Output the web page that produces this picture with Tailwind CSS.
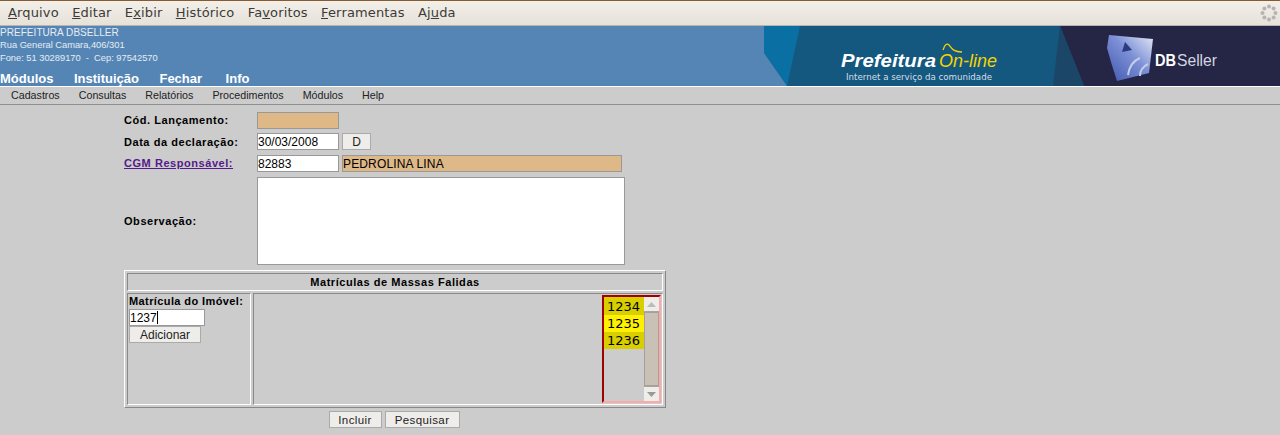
<!DOCTYPE html>
<html><head><meta charset="utf-8">
<script src="https://cdn.jsdelivr.net/npm/@tailwindcss/browser@4"></script>
<title>Prefeitura On-line</title></head>
<body class="m-0 h-[435px] w-[1280px] overflow-hidden bg-[#cccccc] font-['Liberation_Sans',sans-serif] text-black">
<div class="flex h-[26px] items-center justify-between border-t border-t-[#8a5a30] border-b border-b-[#b9b5ae] bg-gradient-to-b from-[#f2efe9] to-[#e6e2da] pl-2 pr-[2px] font-['DejaVu_Sans',sans-serif] text-[13px] text-[#3c3b37]">
  <div class="flex gap-[13.3px] tracking-[0.15px]">
    <span><u>A</u>rquivo</span><span><u>E</u>ditar</span><span>E<u>x</u>ibir</span><span><u>H</u>istórico</span><span>Fa<u>v</u>oritos</span><span><u>F</u>erramentas</span><span>Aj<u>u</u>da</span>
  </div>
  <svg width="18" height="18" viewBox="0 0 18 18" fill="#b4b4b4"><circle cx="9" cy="2.500" r="2"/><circle cx="13.600" cy="4.400" r="2"/><circle cx="15.500" cy="9" r="2"/><circle cx="13.600" cy="13.600" r="2"/><circle cx="9" cy="15.500" r="2"/><circle cx="4.400" cy="13.600" r="2"/><circle cx="2.500" cy="9" r="2"/><circle cx="4.400" cy="4.400" r="2"/></svg>
</div>
<header class="relative h-[60px] overflow-hidden bg-[#5585b5] text-white">
  <div class="flex h-full flex-col">
    <p class="h-[13px] text-[10px] leading-[13px] tracking-[0.05px] text-white/85">PREFEITURA DBSELLER</p>
    <p class="h-[13px] text-[9.300px] leading-[13px] text-white/85">Rua General Camara,406/301</p>
    <p class="h-[13px] text-[9.300px] leading-[13px] whitespace-pre text-white/85">Fone: 51 30289170  -  Cep: 97542570</p>
    <nav class="mt-[7px] flex gap-[20.500px] text-[13px] leading-[14px] font-bold"><span>Módulos</span><span>Instituição</span><span>Fechar</span><span class="ml-[3px]">Info</span></nav>
  </div>
  <svg class="absolute top-0 left-[764px]" width="516" height="60" viewBox="0 0 516 60">
    <defs><linearGradient id="dbg" x1="1" y1="0" x2="0" y2="1"><stop offset="0" stop-color="#e4e8f6"/><stop offset="0.45" stop-color="#7d90d6"/><stop offset="1" stop-color="#3f57ae"/></linearGradient></defs>
    <rect width="516" height="60" fill="#14577f"/>
    <polygon points="0,0 36,0 23,60 0,27" fill="#0a70a3"/>
    <polygon points="0,27 23,60 0,60" fill="#5585b5"/>
    <polygon points="296,0 516,0 516,60 320,60" fill="#252645"/>
    <polygon points="296,0 320,60 289,60" fill="#1b4667"/>
    <polygon points="345,9 389,13 385,47 353,55 347,36 343,22" fill="url(#dbg)"/>
    <polygon points="361,16 368,24 358,26" fill="#2c3a80"/>
    <path d="M364 49 Q366 36 376 32 M376 50 Q376 42 384 38" stroke="#c2cde9" stroke-width="2" fill="none"/>
    <path d="M179 24 C181 18 183 17 185 19 C188 23 190 26 198 26" stroke="#f4d400" stroke-width="1.300" fill="none"/>
    <text x="77" y="41" font-family="'Liberation Sans',sans-serif" font-size="18" font-weight="700" font-style="italic" fill="#fff" textLength="95" lengthAdjust="spacingAndGlyphs">Prefeitura</text>
    <text x="175" y="41" font-family="'Liberation Sans',sans-serif" font-size="18" font-style="italic" fill="#f4d400" textLength="58" lengthAdjust="spacingAndGlyphs">On-line</text>
    <text x="82" y="54" font-family="'DejaVu Sans',sans-serif" font-size="8.500" fill="#d5dfe6" textLength="146" lengthAdjust="spacingAndGlyphs">Internet a serviço da comunidade</text>
    <text x="391" y="40" font-family="'Liberation Sans',sans-serif" font-size="16" font-weight="700" fill="#fff" textLength="21" lengthAdjust="spacingAndGlyphs">DB</text>
    <text x="413" y="40" font-family="'Liberation Sans',sans-serif" font-size="16" fill="#d3d6e0" textLength="40" lengthAdjust="spacingAndGlyphs">Seller</text>
  </svg>
</header>
<nav class="flex h-[19px] items-center gap-[19px] border-t border-t-white border-b border-b-[#8f8f8f] pl-[11px] text-[10.700px] text-[#222]">
  <span>Cadastros</span><span>Consultas</span><span>Relatórios</span><span>Procedimentos</span><span>Módulos</span><span>Help</span>
</nav>
<main class="ml-[124px] w-[542px] pt-[7px] text-[11px] tracking-[0.55px]">
  <div class="grid grid-cols-[133px_1fr] grid-rows-[21px_22px_22px_88px] items-start">
    <label class="font-bold leading-[17px]">Cód. Lançamento:</label>
    <div class="h-[17px] w-[82px] border border-[#999] bg-[#deb887]"></div>
    <label class="font-bold leading-[18px]">Data da declaração:</label>
    <div class="flex items-start gap-[3px]">
      <div class="h-[17px] w-[82px] border border-[#999] bg-white text-[12px] leading-[16px] tracking-normal">30/03/2008</div>
      <button class="h-[17px] w-[29px] border border-[#aaa] bg-[#efedea] text-[12px] leading-[14px] tracking-normal text-[#222]">D</button>
    </div>
    <a class="font-bold leading-[17px] text-[#551a8b] underline">CGM Responsável:</a>
    <div class="flex items-start gap-[3px]">
      <div class="h-[17px] w-[82px] border border-[#999] bg-white text-[12px] leading-[16px] tracking-normal">82883</div>
      <div class="h-[17px] w-[280px] border border-[#999] bg-[#deb887] text-[12px] leading-[16px] tracking-[0.15px]">PEDROLINA LINA</div>
    </div>
    <label class="self-center font-bold">Observação:</label>
    <div class="h-[88px] w-[368px] border border-[#999] bg-white"></div>
  </div>
  <section class="mt-[5px] h-[138px] border border-t-white border-l-white border-r-[#888] border-b-[#888] bg-[#cccccc] p-[2px]">
    <h2 class="h-[18px] border border-t-[#888] border-l-[#888] border-r-white border-b-white text-center font-bold leading-[17px]">Matrículas de Massas Falidas</h2>
    <div class="mt-[2px] flex h-[112px] gap-[2px]">
      <div class="w-[124px] border border-t-[#888] border-l-[#888] border-r-white border-b-white pl-[1px]">
        <p class="font-bold leading-[15px] tracking-[0.4px]">Matrícula do Imóvel:</p>
        <div class="flex h-[17px] w-[76px] items-center border border-[#999] bg-white text-[12px] tracking-normal">1237<span class="h-[13px] w-px bg-black"></span></div>
        <button class="block h-[17px] w-[72px] border border-[#aaa] bg-[#efedea] text-[12px] leading-[14px] tracking-normal text-[#222]">Adicionar</button>
      </div>
      <div class="relative flex-1 border border-t-[#888] border-l-[#888] border-r-white border-b-white">
        <div class="absolute top-[1px] right-[1px] flex h-[108px] w-[59px] border-t-2 border-l-2 border-t-[#a00000] border-l-[#a00000] border-r-2 border-b-2 border-r-[#ffa8a8] border-b-[#ffa8a8] font-['DejaVu_Sans',sans-serif] text-[13px] tracking-normal">
          <div class="w-[40px]">
            <div class="h-[18px] bg-[#d9cf00] pt-[1px] pl-[3px] leading-[17px]">1234</div>
            <div class="h-[17px] bg-[#ffef00] pl-[3px] leading-[17px]">1235</div>
            <div class="h-[17px] bg-[#d9cf00] pl-[3px] leading-[17px]">1236</div>
          </div>
          <div class="flex w-[15px] flex-col bg-[#a8a39c]">
            <div class="flex h-[14px] items-center justify-center bg-[#efedea]"><svg width="9" height="5" viewBox="0 0 9 5"><polygon points="4.500,0 9,5 0,5" fill="#bbb"/></svg></div>
            <div class="my-px flex-1 border border-[#a8a098] bg-[#c9c0b6]"></div>
            <div class="flex h-[14px] items-center justify-center bg-[#efedea]"><svg width="9" height="5" viewBox="0 0 9 5"><polygon points="0,0 9,0 4.500,5" fill="#999"/></svg></div>
          </div>
        </div>
      </div>
    </div>
  </section>
  <div class="mt-[3px] flex justify-center gap-[3px] pr-[2px]">
    <button class="h-[17px] w-[53px] border border-[#aaa] bg-[#efedea] text-[11.500px] leading-[14px] tracking-[0.4px] text-[#222]">Incluir</button>
    <button class="h-[17px] w-[75px] border border-[#aaa] bg-[#efedea] text-[11.500px] leading-[14px] tracking-[0.4px] text-[#222]">Pesquisar</button>
  </div>
</main>
</body></html>
